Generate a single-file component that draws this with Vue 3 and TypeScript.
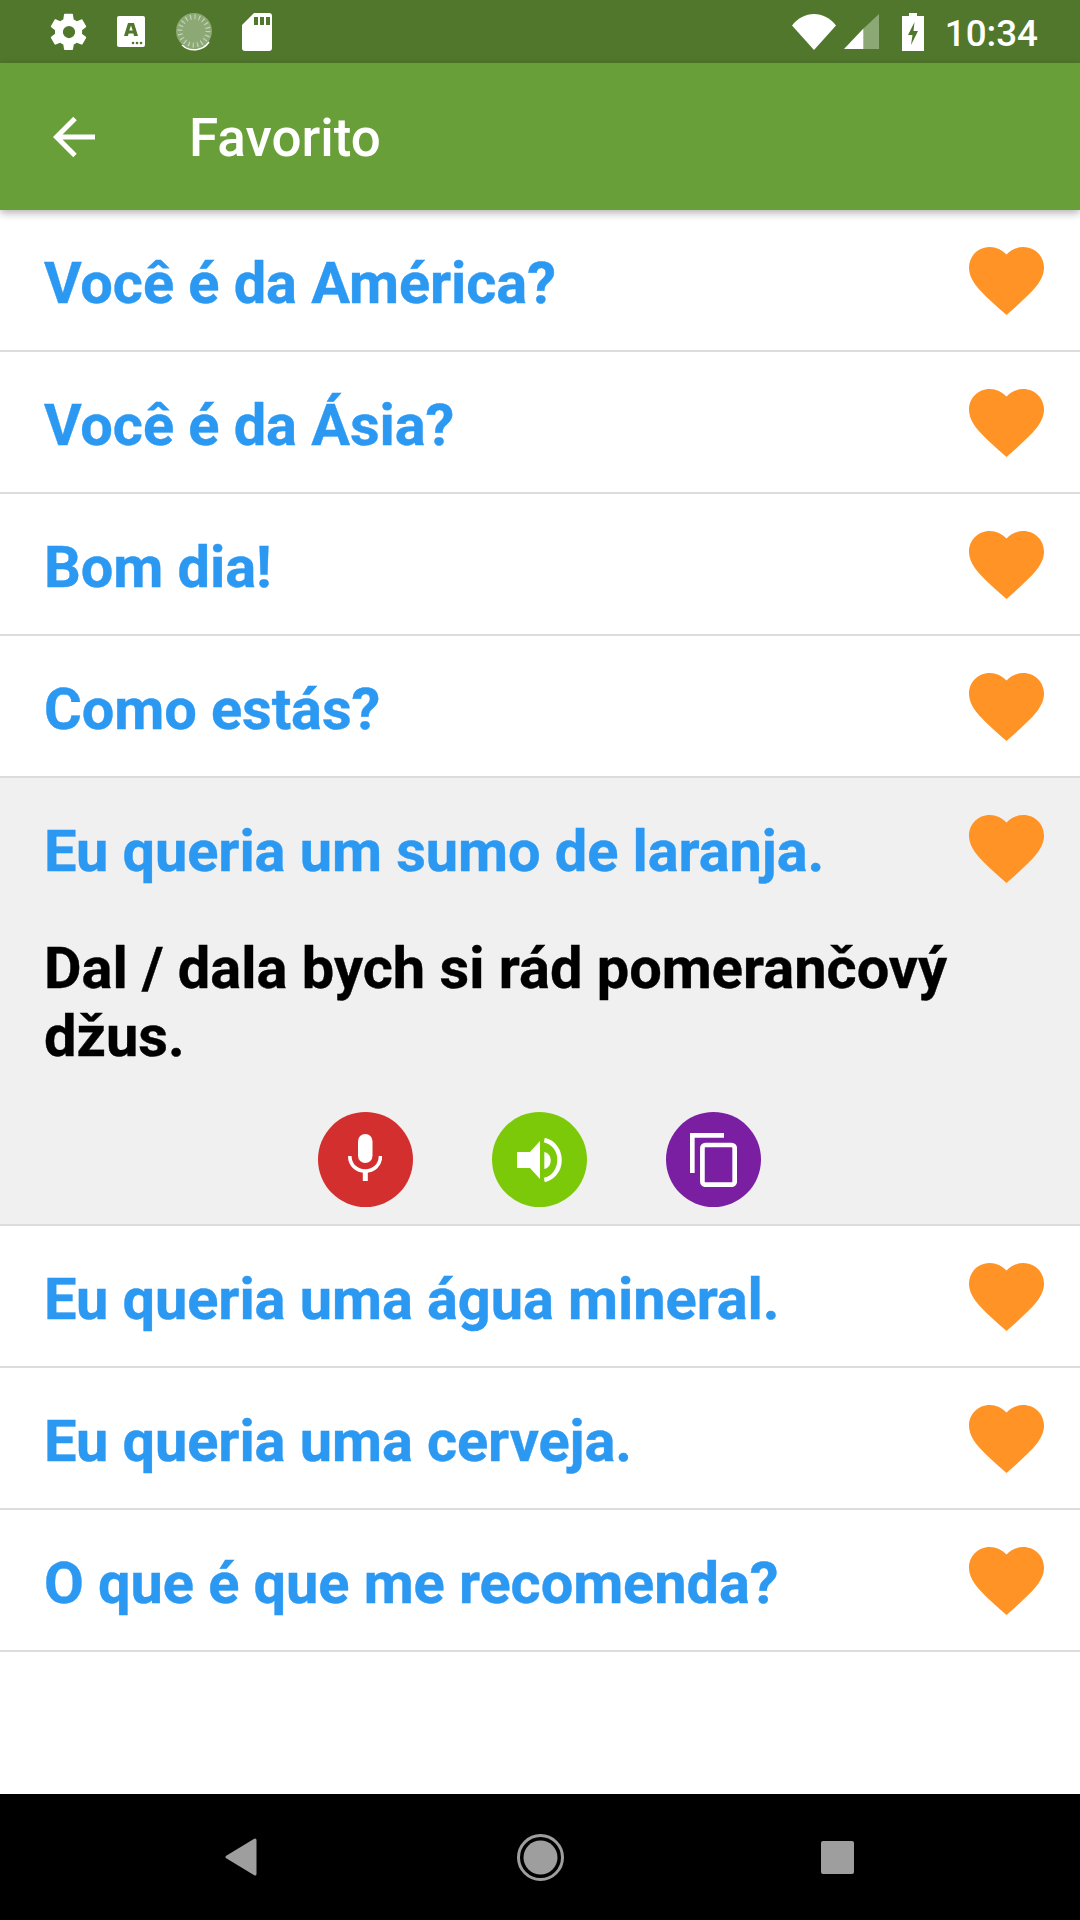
<template>
  <div class="screen">
    <div class="status-bar">
      <div class="status-left">
        <svg class="st-gear" viewBox="0 0 24 24"><path fill="#fff" d="M19.4 13c.04-.32.1-.66.1-1s-.03-.68-.07-1l2.2-1.7c.2-.15.25-.43.12-.66l-2.08-3.6c-.13-.23-.4-.3-.64-.23l-2.6 1.05c-.53-.4-1.1-.74-1.75-1l-.4-2.76A.5.5 0 0 0 13.8 1.6H9.64a.5.5 0 0 0-.5.43l-.4 2.76c-.63.26-1.2.6-1.74 1l-2.6-1.05c-.24-.08-.5 0-.64.23l-2.08 3.6c-.14.23-.08.5.12.66L4.07 11c-.04.32-.07.66-.07 1s.03.68.07 1l-2.27 1.7c-.2.15-.25.43-.12.66l2.08 3.6c.13.23.4.3.64.23l2.6-1.05c.53.4 1.1.74 1.75 1l.4 2.76c.03.25.24.43.5.43h4.16c.26 0 .47-.18.5-.43l.4-2.76c.63-.26 1.2-.6 1.74-1l2.6 1.05c.24.08.5 0 .64-.23l2.08-3.6c.14-.23.08-.5-.12-.66L19.4 13zM12 15.500a3.500 3.500 0 1 1 0-7 3.500 3.500 0 0 1 0 7z"/></svg>
        <svg class="st-a" viewBox="0 0 28 31"><rect width="28" height="31" rx="2" fill="#fff"/><path fill="#50772b" d="M11 7h6l4 13h-4l-.6-2.400h-4.800L11 20H7zm1.300 7.600h3.400L14 9.500z"/><circle cx="16" cy="27" r="1.300" fill="#50772b"/><circle cx="20" cy="27" r="1.300" fill="#50772b"/><circle cx="24" cy="27" r="1.300" fill="#50772b"/></svg>
        <svg class="st-spin" viewBox="0 0 38 38">
          <circle cx="18" cy="18" r="18" fill="#8ca874"/>
          <path d="M33 29A18 18 0 0 1 6 32 18 18 0 0 0 33 29Z" fill="#fff" stroke="#fff" stroke-width="1.500"/>
          <circle cx="18" cy="18" r="14" fill="none" stroke="#c3d2b6" stroke-width="5" stroke-dasharray="1.200 3.200"/>
        </svg>
        <svg class="st-sd" viewBox="0 0 30 38"><path fill="#fff" d="M12 0h15a3 3 0 0 1 3 3v32a3 3 0 0 1-3 3H3a3 3 0 0 1-3-3V12z"/><path fill="#50772b" d="M12 4h4v8h-4zM18 4h4v8h-4zM24 4h4v8h-4z"/></svg>
      </div>
      <div class="status-right">
        <svg class="st-wifi" viewBox="0 0 44 36"><path fill="#fff" d="M0 11.500C6 4 13.500 0 22 0s16 4 22 11.500L22 36z"/></svg>
        <svg class="st-signal" viewBox="0 0 36 36" preserveAspectRatio="none"><path fill="#8ca874" d="M36 0v36H20V15z"/><path fill="#fff" d="M20 15v21H0z"/></svg>
        <svg class="st-batt" viewBox="0 0 22 38"><path fill="#fff" d="M7 0h8v3h7v35H0V3h7z"/><path fill="#50772b" d="M12.500 9 6 22h4.500L9 32l7-14h-4.500z"/></svg>
        <span class="clock">10:34</span>
      </div>
    </div>

    <header class="app-bar">
      <svg class="back" viewBox="0 0 44 42"><path d="M42 21H3.500M22 2.500 3.500 21 22 39.500" fill="none" stroke="#fff" stroke-width="5"/></svg>
      <span class="title">Favorito</span>
    </header>

    <main class="list">
      <div v-for="item in items" :key="item.text" class="row" :class="{ open: item.translation }">
        <div class="row-head">
          <span class="phrase">{{ item.text }}</span>
          <svg class="heart" viewBox="0 0 76 70" preserveAspectRatio="none"><path fill="#ff9326" d="M38 70 32.500 65C13 47.500 0 35.700 0 21.200 0 9.400 9.200 0 21 0c6.500 0 12.800 3 17 7.800C42.200 3 48.500 0 55 0c11.800 0 21 9.400 21 21.200 0 14.500-13 26.300-32.500 43.800z"/></svg>
        </div>
        <template v-if="item.translation">
          <p class="translation">{{ item.translation }}</p>
          <div class="actions">
            <div class="action red">
              <svg viewBox="0 0 34 47" class="ic-mic"><rect x="10" y="0" width="14.500" height="29" rx="7.250" fill="#fff"/><path d="M1.800 22c0 9 6.700 15 15.400 15S32.500 31 32.500 22" fill="none" stroke="#fff" stroke-width="3.600"/><rect x="14.800" y="36" width="5" height="11" fill="#fff"/></svg>
            </div>
            <div class="action green">
              <svg viewBox="0 0 45 44" class="ic-speaker"><path fill="#fff" d="M0 14h13L23 3v38L13 30H0z"/><path fill="#fff" d="M27.300 14c4 1 6.400 4 6.400 8.500s-2.400 7.500-6.400 8.500z"/><path d="M27.300 2c9 2 15.200 10 15.200 20s-6.200 18-15.200 20" fill="none" stroke="#fff" stroke-width="4.500"/></svg>
            </div>
            <div class="action purple">
              <svg viewBox="0 0 47 54" class="ic-copy"><path d="M34 2.300H2.300V40" fill="none" stroke="#fff" stroke-width="4.700"/><rect x="12.400" y="12" width="32.300" height="39.700" rx="3" fill="none" stroke="#fff" stroke-width="4.700"/></svg>
            </div>
          </div>
        </template>
      </div>
    </main>

    <footer class="nav-bar">
      <svg class="nav-back" viewBox="0 0 32 38"><path fill="#9e9e9e" stroke="#9e9e9e" stroke-width="3" stroke-linejoin="round" d="M30 2v34L2 19z"/></svg>
      <svg class="nav-home" viewBox="0 0 47 47"><circle cx="23.500" cy="23.500" r="22" fill="none" stroke="#9e9e9e" stroke-width="3"/><circle cx="23.500" cy="23.500" r="17" fill="#9e9e9e"/></svg>
      <div class="nav-recent"></div>
    </footer>
  </div>
</template>

<script setup lang="ts">
interface Phrase {
  text: string
  translation?: string
}

const items: Phrase[] = [
  { text: 'Você é da América?' },
  { text: 'Você é da Ásia?' },
  { text: 'Bom dia!' },
  { text: 'Como estás?' },
  { text: 'Eu queria um sumo de laranja.', translation: 'Dal / dala bych si rád pomerančový džus.' },
  { text: 'Eu queria uma água mineral.' },
  { text: 'Eu queria uma cerveja.' },
  { text: 'O que é que me recomenda?' },
]
</script>

<style>
html,
body {
  margin: 0;
  background: #fff;
}
</style>

<style scoped>
.screen {
  width: 1080px;
  height: 1920px;
  display: flex;
  flex-direction: column;
  font-family: Roboto, 'Liberation Sans', sans-serif;
  overflow: hidden;
  background: #fff;
}

.status-bar {
  height: 63px;
  flex: none;
  background: #50772b;
  display: flex;
  align-items: center;
  justify-content: space-between;
  padding: 0 42px 0 48px;
}

.status-left,
.status-right {
  display: flex;
  align-items: center;
}

.st-gear {
  width: 42px;
  height: 42px;
  margin-right: 27px;
}

.st-a {
  width: 28px;
  height: 31px;
  margin-right: 31px;
}

.st-spin {
  width: 38px;
  height: 38px;
  margin-right: 28px;
}

.st-sd {
  width: 30px;
  height: 38px;
}

.st-wifi {
  width: 44px;
  height: 36px;
  margin-right: 8px;
}

.st-signal {
  width: 35px;
  height: 35px;
  margin-right: 23px;
}

.st-batt {
  width: 22px;
  height: 38px;
  margin-right: 21px;
}

.clock {
  color: #fff;
  font-size: 36.75px;
  font-weight: 500;
  padding-top: 3px;
}

.app-bar {
  height: 147px;
  flex: none;
  background: #689f38;
  display: flex;
  align-items: center;
  padding-left: 53px;
  box-shadow: 0 3px 8px rgba(0, 0, 0, 0.3);
  position: relative;
}

.back {
  width: 44px;
  height: 42px;
  margin-right: 92px;
}

.title {
  color: #fff;
  font-size: 53px;
  font-weight: 500;
  padding-top: 2px;
}

.list {
  flex: 1;
}

.row {
  border-bottom: 2px solid #dcdcdc;
  box-sizing: border-box;
  padding: 0 36px 0 44px;
}

.row.open {
  background: #f0f0f0;
  height: 448px;
}

.row-head {
  height: 140px;
  display: flex;
  align-items: center;
  justify-content: space-between;
}

.phrase {
  color: #2b98f2;
  font-size: 57.75px;
  font-weight: 700;
  letter-spacing: -0.08px;
  -webkit-text-stroke: 0.4px #2b98f2;
  padding-top: 5px;
}

.heart {
  width: 75px;
  height: 68px;
  margin-top: 2px;
}

.translation {
  margin: 16px 0 0;
  color: #000;
  font-size: 57.75px;
  font-weight: 700;
  line-height: 68px;
  -webkit-text-stroke: 0.4px #000;
}

.actions {
  display: flex;
  justify-content: center;
  gap: 79px;
  margin-top: 42px;
  padding-right: 10px;
}

.action {
  width: 95px;
  height: 95px;
  border-radius: 50%;
  display: flex;
  align-items: center;
  justify-content: center;
}

.red {
  background: #d32f2f;
}

.green {
  background: #7cc90a;
}

.purple {
  background: #7b1fa2;
}

.ic-mic {
  width: 34px;
  height: 47px;
  margin-top: -5px;
}

.ic-speaker {
  width: 45px;
  height: 44px;
}

.ic-copy {
  width: 47px;
  height: 54px;
}

.nav-bar {
  height: 126px;
  flex: none;
  background: #000;
  display: flex;
  align-items: center;
  padding-left: 225px;
}

.nav-back {
  width: 32px;
  height: 38px;
  margin-right: 260px;
}

.nav-home {
  width: 47px;
  height: 47px;
  margin-right: 257px;
}

.nav-recent {
  width: 33px;
  height: 33px;
  border-radius: 2px;
  background: #9e9e9e;
}
</style>
